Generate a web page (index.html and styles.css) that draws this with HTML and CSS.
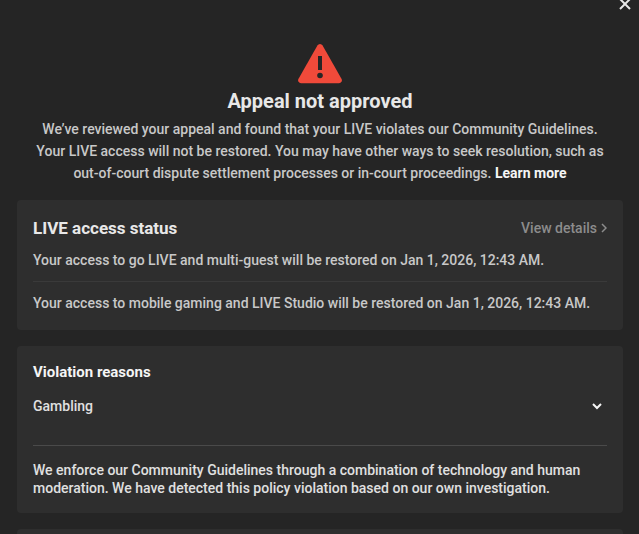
FILE: index.html
```html
<!DOCTYPE html>
<html lang="en">
<head>
    <meta charset="UTF-8">
    <meta name="viewport" content="width=device-width, initial-scale=1.0">
    <title>Appeal not approved</title>
    <link rel="stylesheet" href="styles.css">
</head>
<body>
    <header class="top-bar">
        <button type="button" class="close-btn" aria-label="Close">
            <svg width="12" height="10" viewBox="0 2 12 10" fill="none" stroke="#e8e8e8" stroke-width="2">
                <path d="M1 1l10 10M11 1L1 11"/>
            </svg>
        </button>
    </header>

    <main class="container">
        <section class="result">
            <svg class="warning-icon" width="46" height="40" viewBox="0 0 46 40">
                <path d="M20.4 1.6a3 3 0 0 1 5.2 0l19 33.4a3 3 0 0 1-2.6 4.3H4a3 3 0 0 1-2.6-4.3z" fill="#f04a3a"/>
                <rect x="21" y="12" width="4" height="14" fill="#252525"/>
                <circle cx="23" cy="31.5" r="2.8" fill="#252525"/>
            </svg>
            <h1>Appeal not approved</h1>
            <p>We’ve reviewed your appeal and found that your LIVE violates our Community Guidelines. Your LIVE access will not be restored. You may have other ways to seek resolution, such as out-of-court dispute settlement processes or in-court proceedings. <a href="#" class="learn-more">Learn more</a></p>
        </section>

        <section class="card status">
            <div class="card-header">
                <h2>LIVE access status</h2>
                <a href="#" class="details-link">View details
                    <svg width="6" height="10" viewBox="0 0 6 10" fill="none" stroke="currentColor" stroke-width="1.5">
                        <path d="M1 1l4 4-4 4"/>
                    </svg>
                </a>
            </div>
            <ul class="status-list">
                <li>Your access to go LIVE and multi-guest will be restored on Jan 1, 2026, 12:43 AM.</li>
                <li>Your access to mobile gaming and LIVE Studio will be restored on Jan 1, 2026, 12:43 AM.</li>
            </ul>
        </section>

        <section class="card violation">
            <h3>Violation reasons</h3>
            <button type="button" class="reason" aria-expanded="false">
                Gambling
                <svg width="10" height="7" viewBox="0 0 10 7" fill="none" stroke="#f5f5f5" stroke-width="2">
                    <path d="M1 1l4 4 4-4"/>
                </svg>
            </button>
            <p>We enforce our Community Guidelines through a combination of technology and human moderation. We have detected this policy violation based on our own investigation.</p>
        </section>

        <section class="card next-card"></section>
    </main>
</body>
</html>
```

FILE: styles.css
```css
* {
    margin: 0;
    padding: 0;
    box-sizing: border-box;
}

body {
    background: #252525;
    color: #c8c8c8;
    font-family: Roboto, "Liberation Sans", Arial, sans-serif;
    font-size: 14px;
    font-weight: 500;
    line-height: 22px;
    min-height: 100vh;
    display: flex;
    flex-direction: column;
}

a {
    text-decoration: none;
}

button {
    background: none;
    border: none;
    color: inherit;
    font: inherit;
    cursor: pointer;
}

svg {
    display: block;
}

.top-bar {
    display: flex;
    justify-content: flex-end;
    padding-right: 8px;
}

.container {
    flex: 1;
    display: flex;
    flex-direction: column;
    gap: 16px;
    padding: 34px 16px 0 17px;
}

.result {
    text-align: center;
}

.warning-icon {
    margin: 0 auto 4px;
}

h1 {
    font-size: 20px;
    font-weight: 700;
    line-height: 26px;
    color: #e8e8e8;
    margin-bottom: 4px;
}

.result p {
    padding: 0 12px;
}

.learn-more {
    color: #f5f5f5;
    font-weight: 700;
}

.card {
    background: #2e2e2e;
    border-radius: 4px;
    padding: 16px;
}

.card-header {
    display: flex;
    justify-content: space-between;
    align-items: center;
}

h2 {
    font-size: 17px;
    font-weight: 700;
    line-height: 24px;
    color: #e8e8e8;
}

.details-link {
    display: flex;
    align-items: center;
    gap: 4px;
    color: #8c8c8c;
}

.status-list {
    list-style: none;
}

.status-list li {
    padding: 9px 0 10px;
}

.status-list li + li {
    border-top: 1px solid #3a3a3a;
    padding: 10px 0 0;
}

.violation {
    color: #e0e0e0;
    line-height: 18px;
}

h3 {
    font-size: 15px;
    font-weight: 700;
    line-height: 20px;
    color: #f5f5f5;
}

.reason {
    display: flex;
    justify-content: space-between;
    align-items: center;
    width: 100%;
    padding: 15px 5px 30px 0;
    border-bottom: 1px solid #4a4a4a;
    margin-bottom: 15px;
}

.next-card {
    flex: 1;
    padding: 0;
    border-radius: 4px 4px 0 0;
}
```
